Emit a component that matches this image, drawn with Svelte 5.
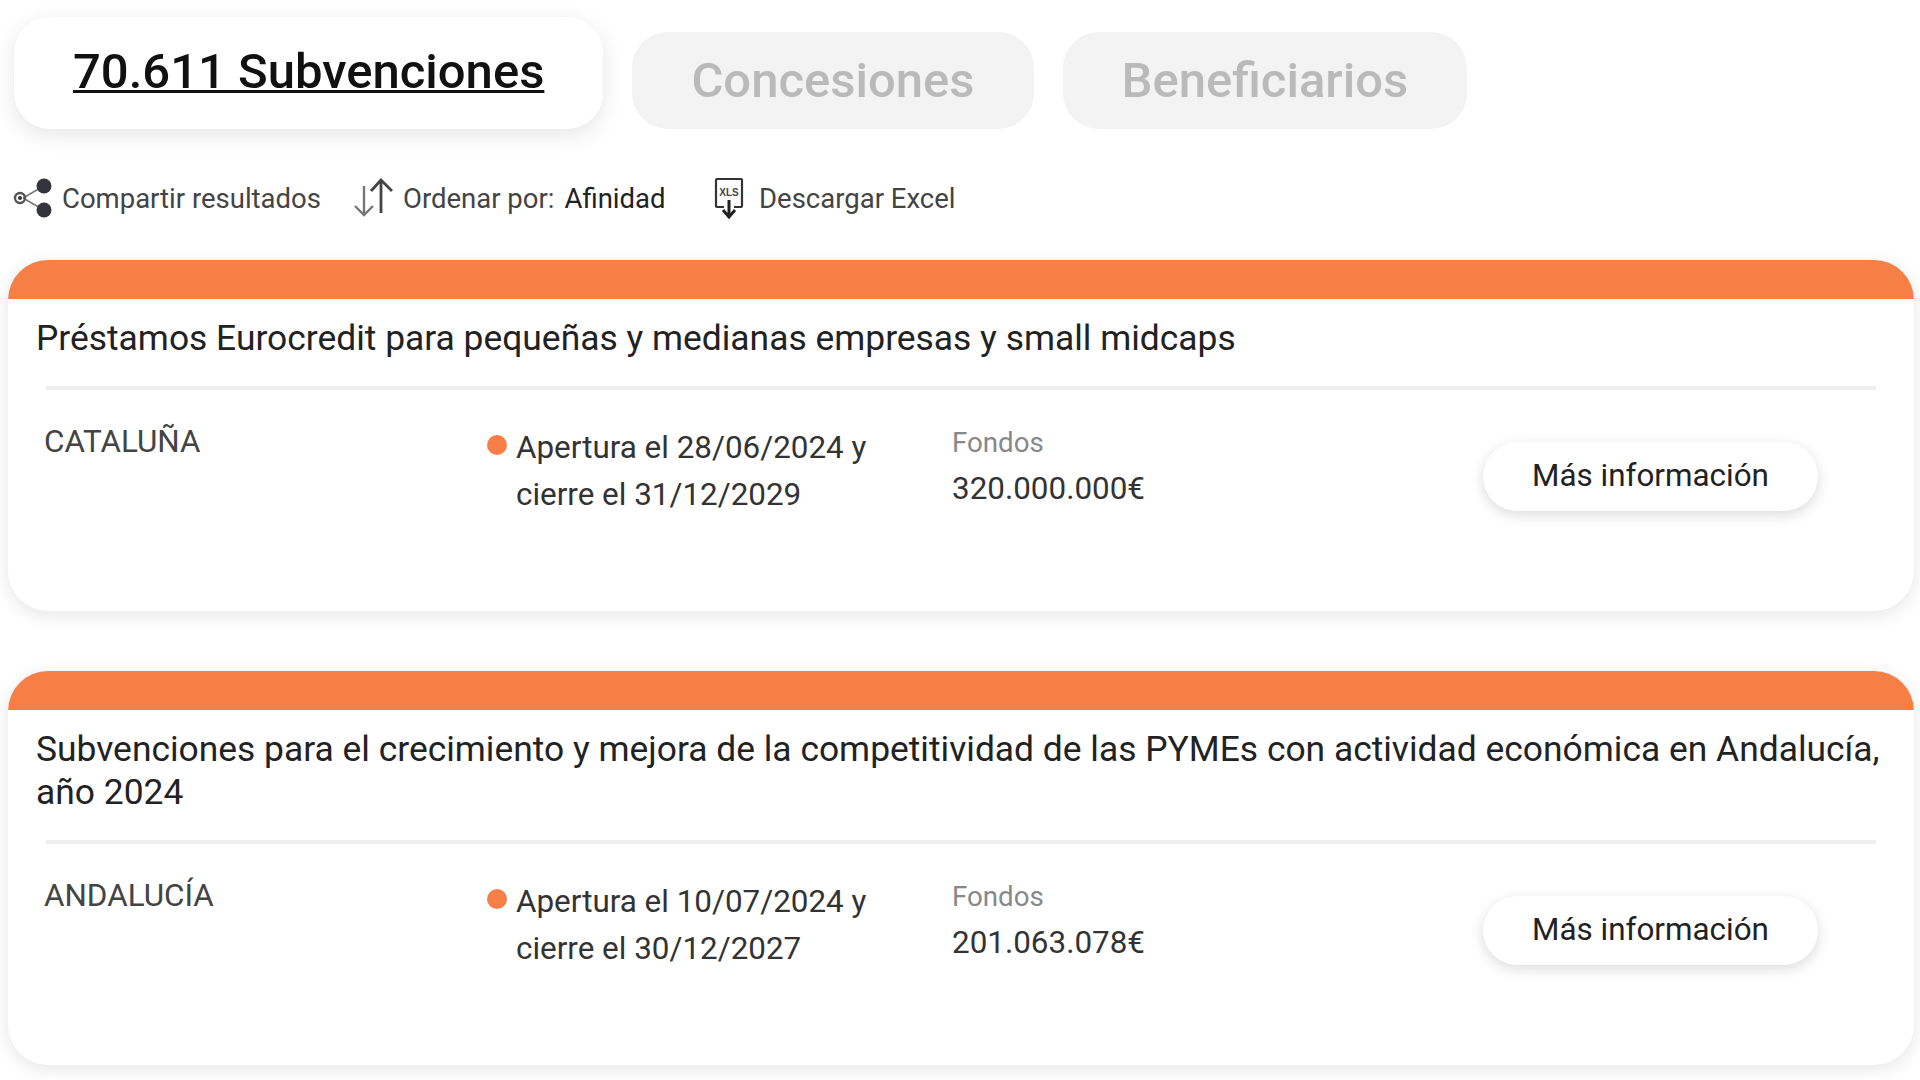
<script>
  const cards = [
    {
      title: "Préstamos Eurocredit para pequeñas y medianas empresas y small midcaps",
      region: "CATALUÑA",
      open: "Apertura el 28/06/2024 y",
      close: "cierre el 31/12/2029",
      funds: "320.000.000€"
    },
    {
      title: "Subvenciones para el crecimiento y mejora de la competitividad de las PYMEs con actividad económica en Andalucía, año 2024",
      region: "ANDALUCÍA",
      open: "Apertura el 10/07/2024 y",
      close: "cierre el 30/12/2027",
      funds: "201.063.078€"
    }
  ];
</script>

<main class="page">
  <nav class="tabs">
    <div class="tab active">70.611 Subvenciones</div>
    <div class="tab">Concesiones</div>
    <div class="tab">Beneficiarios</div>
  </nav>

  <div class="toolbar">
    <div class="tool share">
      <svg width="40" height="40" viewBox="0 0 40 40">
        <path d="M10 20 L29 9 M10 20 L29 31" stroke="#777" stroke-width="1.5" fill="none" />
        <circle cx="7" cy="20" r="5" fill="none" stroke="#555" stroke-width="2.4" />
        <circle cx="7" cy="20" r="2" fill="#333" />
        <circle cx="31" cy="8" r="7.5" fill="#34343c" />
        <circle cx="31" cy="32" r="7.5" fill="#34343c" />
      </svg>
      <span>Compartir resultados</span>
    </div>
    <div class="tool sort">
      <svg width="40" height="40" viewBox="0 0 40 40">
        <path d="M11 8 V37 M2 28 L11 37 L20 28" stroke="#777" stroke-width="2.4" fill="none" />
        <path d="M28 35 V2 M18 13 L28 2 L39 13" stroke="#444" stroke-width="2.8" fill="none" />
      </svg>
      <span>Ordenar por:</span>
      <span class="value">Afinidad</span>
    </div>
    <div class="tool excel">
      <svg width="32" height="42" viewBox="0 0 32 42">
        <path d="M10 30 H3 Q2 30 2 29 V3 Q2 2 3 2 H27 Q28 2 28 3 V29 Q28 30 27 30 H20" stroke="#333" stroke-width="2.2" fill="none" />
        <text x="15" y="19" text-anchor="middle" class="xls">XLS</text>
        <path d="M15 23 V40 M9 33 L15 40 L21 33" stroke="#222" stroke-width="3" fill="none" />
      </svg>
      <span>Descargar Excel</span>
    </div>
  </div>

  {#each cards as card}
    <article class="card">
      <div class="band"></div>
      <h2>{card.title}</h2>
      <div class="rule"></div>
      <div class="row">
        <div class="region">{card.region}</div>
        <div class="dates">
          <span class="dot"></span>
          <p>{card.open}<br />{card.close}</p>
        </div>
        <div class="funds">
          <div class="label">Fondos</div>
          <div class="amount">{card.funds}</div>
        </div>
        <button>Más información</button>
      </div>
    </article>
  {/each}
</main>

<style>
  :global(body) {
    margin: 0;
    background: #fff;
  }

  .page {
    font-family: Roboto, sans-serif;
    width: 1920px;
    height: 1080px;
    overflow: hidden;
    box-sizing: border-box;
    padding: 17px 6px 0 8px;
    color: #222;
  }

  .tabs {
    display: flex;
    align-items: flex-end;
    gap: 29px;
    padding-left: 6px;
  }

  .tab {
    height: 97px;
    padding: 0 59px;
    border-radius: 36px;
    background: #f3f3f3;
    color: #bababa;
    font-size: 49px;
    font-weight: 500;
    line-height: 97px;
  }

  .tab.active {
    height: 112px;
    line-height: 110px;
    padding: 0 59px;
    background: #fff;
    color: #111;
    text-decoration: underline;
    text-decoration-thickness: 3px;
    box-shadow: 0 6px 22px rgba(0, 0, 0, 0.1);
  }

  .toolbar {
    display: flex;
    align-items: center;
    height: 44px;
    margin-top: 47px;
    padding-left: 5px;
    font-size: 27.5px;
    color: #444;
  }

  .tool {
    display: flex;
    align-items: center;
  }

  .share {
    gap: 9px;
    width: 340px;
  }

  .sort {
    gap: 10px;
    width: 361px;
  }

  .value {
    color: #222;
  }

  .excel {
    gap: 13px;
  }

  .xls {
    font-family: "Liberation Sans", sans-serif;
    font-size: 10px;
    font-weight: 700;
    fill: #444;
  }

  .card {
    background: #fff;
    border-radius: 40px;
    box-shadow: 0 4px 18px rgba(0, 0, 0, 0.1);
    overflow: hidden;
    margin-top: 40px;
    padding-bottom: 93px;
  }

  .card + .card {
    margin-top: 60px;
  }

  .band {
    height: 39px;
    background: #f67f45;
  }

  h2 {
    margin: 18px 28px 0;
    font-size: 35.4px;
    font-weight: 400;
    line-height: 43px;
    color: #222;
  }

  .rule {
    height: 4px;
    margin: 26px 38px 0;
    background: #eee;
  }

  .row {
    display: flex;
    align-items: flex-start;
    padding: 32px 96px 0 36px;
  }

  .region {
    width: 443px;
    font-size: 31.4px;
    line-height: 40px;
    color: #444;
  }

  .dates {
    display: flex;
    width: 465px;
    gap: 9px;
    margin-top: 2px;
  }

  .dot {
    flex: none;
    width: 20px;
    height: 20px;
    margin-top: 11px;
    border-radius: 50%;
    background: #f67f45;
  }

  .dates p {
    margin: 0;
    font-size: 31.4px;
    line-height: 47px;
    color: #333;
  }

  .label {
    font-size: 27.7px;
    line-height: 36px;
    color: #888;
    margin-top: 3px;
  }

  .amount {
    font-size: 31.4px;
    line-height: 40px;
    margin-top: 8px;
    color: #333;
  }

  button {
    margin-left: auto;
    margin-top: 20px;
    width: 335px;
    height: 69px;
    border: none;
    border-radius: 35px;
    background: #fff;
    box-shadow: 0 4px 14px rgba(0, 0, 0, 0.14);
    font-family: inherit;
    font-size: 31.4px;
    line-height: 66px;
    color: #222;
    padding: 0 0 2px;
  }
</style>
